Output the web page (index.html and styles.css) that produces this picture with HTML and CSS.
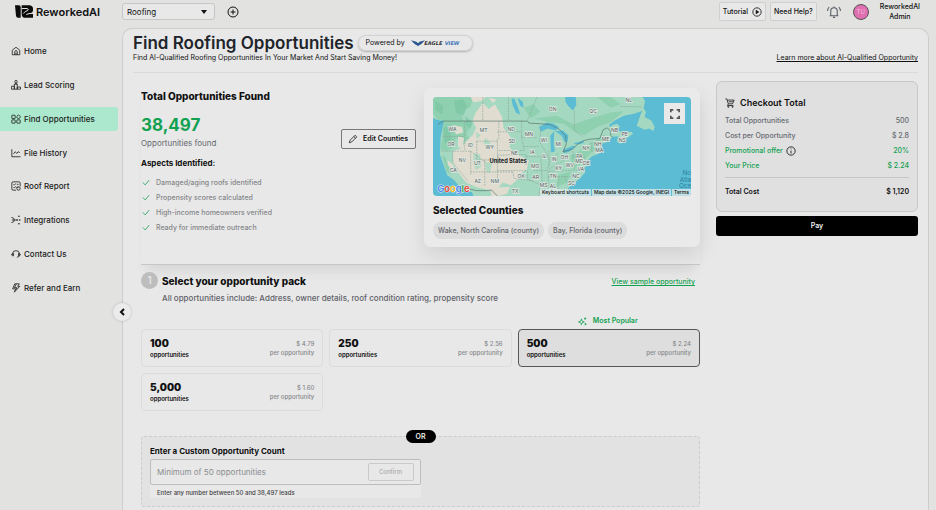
FILE: index.html
```html
<!DOCTYPE html>
<html lang="en">

<head>
  <meta charset="UTF-8">
  <meta name="viewport" content="width=device-width, initial-scale=1.0">
  <title>Find Roofing Opportunities</title>
  <link rel="stylesheet" href="styles.css">
</head>

<body>
  <header class="topbar">
    <div class="brand">
      <svg class="brand-logo" viewBox="0 0 54 38">
        <path d="M0 0H12Q17 0 17 6V38H9Q4 38 3 32Z" fill="#0b0b0b" />
        <path d="M20 0H42Q54 0 54 11V16Q54 22 46 24H54V38H32Q20 38 20 27Z" fill="#0b0b0b" />
        <path d="M20 10H36Q43 12 38 16Q30 18 25 25M34 28Q40 24 54 25" fill="none" stroke="#e2e2e0" stroke-width="3" />
      </svg>
      <span>ReworkedAI</span>
    </div>
    <div class="select-wrap">
      <select class="industry" aria-label="Industry">
        <option>Roofing</option>
        <option>Solar</option>
      </select>
      <svg class="caret" viewBox="0 0 6 4"><path d="M0 0H6L3 4Z" fill="#111" /></svg>
    </div>
    <button class="icon-btn" aria-label="Add">
      <svg viewBox="0 0 24 24"><circle cx="12" cy="12" r="10" /><path d="M12 7V17M7 12H17" /></svg>
    </button>
    <div class="topbar-right">
      <button class="top-btn">Tutorial
        <svg viewBox="0 0 24 24"><circle cx="12" cy="12" r="10" /><path d="M10 8L16 12L10 16Z" fill="#111" /></svg>
      </button>
      <button class="top-btn">Need Help?</button>
      <button class="bell" aria-label="Notifications">
        <svg viewBox="0 0 26 26"><path d="M5 20H21M7 20V11Q7 5 13 5Q19 5 19 11V20M13 5V3M11 23H15M4 4Q1 7 1 11M22 4Q25 7 25 11" /></svg>
      </button>
      <span class="avatar">TU</span>
      <span class="user-name">ReworkedAI<br>Admin</span>
    </div>
  </header>

  <div class="layout">
    <aside class="sidebar">
      <nav class="nav">
        <a href="#" class="nav-item">
          <svg viewBox="0 0 24 24"><path d="M3 10L12 3L21 10V21H3ZM9 21V14Q9 11 12 11Q15 11 15 14V21M12 16V21" /></svg>
          Home</a>
        <a href="#" class="nav-item">
          <svg viewBox="0 0 24 24"><path d="M1 22V15H8V22M8 22V10H15V22M15 22V17H23V22ZM1 22H15" /><circle cx="12" cy="4" r="3" /><path d="M9 10Q12 6 15 10" /></svg>
          Lead Scoring</a>
        <a href="#" class="nav-item active">
          <svg viewBox="0 0 24 24"><rect x="2" y="3" width="8" height="8" rx="1" /><rect x="2" y="14" width="8" height="8" rx="1" /><rect x="14" y="14" width="8" height="8" rx="1" /><path d="M18 2L23 7L18 12L13 7Z" /></svg>
          Find Opportunities</a>
        <a href="#" class="nav-item">
          <svg viewBox="0 0 24 24"><path d="M2 3V21H23M6 14L10 9L14 13L17 9L21 11" /></svg>
          File History</a>
        <a href="#" class="nav-item">
          <svg viewBox="0 0 24 24"><path d="M12 22H5Q2 22 2 19V5Q2 2 5 2H19Q22 2 22 5V13M6 8L8 10L11 6M14 8H18M6 15L8 17L11 13" /><circle cx="18" cy="18" r="4" /><path d="M13 15H18" /></svg>
          Roof Report</a>
        <a href="#" class="nav-item">
          <svg viewBox="0 0 24 24"><path d="M1 6Q8 6 8 12Q8 18 1 18M8 12H15M2 12H8" /><g class="solid"><circle cx="19" cy="3" r="2" /><circle cx="15" cy="12" r="2" /><circle cx="21" cy="12" r="2" /><circle cx="19" cy="21" r="2" /></g></svg>
          Integrations</a>
        <a href="#" class="nav-item">
          <svg viewBox="0 0 24 24"><path d="M4 15V11Q4 4 12 4Q20 4 20 11V15Q20 19 14 20M4 11Q1 11 2 15Q3 17 6 16V11ZM20 11Q23 11 22 15Q21 17 18 16V11Z" /></svg>
          Contact Us</a>
        <a href="#" class="nav-item">
          <svg viewBox="0 0 24 24"><path d="M9 2H20L16 8H21L8 22L11 14H4ZM13 2L8 11H14L11 17" /></svg>
          Refer and Earn</a>
      </nav>
      <button class="collapse" aria-label="Collapse menu">
        <svg viewBox="0 0 6 8"><path d="M5 1L2 4L5 7" /></svg>
      </button>
    </aside>

    <main class="panel">
      <div class="page-head">
        <div>
          <div class="title-row">
            <h1>Find Roofing Opportunities</h1>
            <span class="powered">Powered by
              <svg class="eagle" viewBox="0 0 150 18">
                <path d="M0 1L16 5L21 10L26 5L42 1L31 12L21 18L11 12Z" fill="#2b5590" />
                <text x="40" y="15" fill="#333">EAGLE</text>
                <text x="101" y="15" fill="#3f74b8">VIEW</text>
              </svg>
            </span>
          </div>
          <p class="subtitle">Find AI-Qualified Roofing Opportunities In Your Market And Start Saving Money!</p>
        </div>
        <a href="#" class="learn">Learn more about AI-Qualified Opportunity</a>
      </div>

      <div class="columns">
        <div class="content">
          <section class="found">
            <div class="found-left">
              <h2>Total Opportunities Found</h2>
              <div class="count">38,497</div>
              <div class="count-label">Opportunities found</div>
              <h3>Aspects Identified:</h3>
              <ul class="aspects">
                <li><svg viewBox="0 0 10 8"><path d="M1 4L4 7L9 1" /></svg>Damaged/aging roofs identified</li>
                <li><svg viewBox="0 0 10 8"><path d="M1 4L4 7L9 1" /></svg>Propensity scores calculated</li>
                <li><svg viewBox="0 0 10 8"><path d="M1 4L4 7L9 1" /></svg>High-income homeowners verified</li>
                <li><svg viewBox="0 0 10 8"><path d="M1 4L4 7L9 1" /></svg>Ready for immediate outreach</li>
              </ul>
            </div>
            <button class="edit-btn">
              <svg viewBox="0 0 24 24"><path d="M3 21L5 15L17 3L21 7L9 19ZM14 6L18 10" /></svg>
              Edit Counties
            </button>
            <div class="map-card">
              <div class="map">
                <svg class="map-art" viewBox="27 28 776 296" preserveAspectRatio="xMidYMid slice">
                  <rect x="27" y="28" width="776" height="296" fill="#5bbcd3" />
                  <!-- land -->
                  <path fill="#a5d8c1" d="M27 28H656L663 40L658 68L630 78L600 84L570 100L556 114L580 108L588 116L582 128L600 136L622 132L628 138L606 152L592 168L578 160L584 146L566 146L556 160L534 168L528 182L538 190L524 198L504 206L494 216L492 232L482 240L484 254L468 272L446 290L432 302L434 324H142L130 306L112 300L92 276L72 262L58 224L50 200L52 150L60 110L46 98L27 90Z" />
                  <path fill="#a5d8c1" d="M658 62L666 72L662 88L682 98L692 118L688 130L676 122L662 126L638 114L644 98L650 80Z" />
                  <path fill="#8fd0b0" d="M27 28H150L140 60L112 70L120 98L146 112L130 136L142 160L120 172L98 150L92 178L70 190L52 184L62 110L40 92L27 74ZM330 92L400 84L450 110L500 92L560 74L600 70L560 104L520 118L482 142L450 130L420 108L380 104ZM300 60L330 50L350 72L322 92ZM520 28H560L590 50L560 60ZM56 204L66 206L84 260L70 252ZM440 204L480 184L500 166L530 148L540 164L500 196L466 232L448 250ZM404 262L442 250L430 284L400 296Z" />
                  <path fill="#79c5a2" d="M92 40L118 34L132 54L120 84L98 74ZM60 120L80 112L84 156L64 166ZM36 40L60 54L58 80L36 66ZM126 86L148 104L140 122L128 112Z" opacity=".7" />
                  <!-- dry areas -->
                  <path fill="#e0dcd0" d="M156 76L178 46L196 64L214 50L236 88L240 120L262 148L258 178L276 198L316 218L310 244L292 256L288 270L262 292L238 284L224 300L206 308L160 298L128 284L104 252L90 226L88 190L112 182L128 160L148 142L158 120L148 100Z" />
                  <path fill="#e0dcd0" d="M142 28H186L176 40L150 44ZM196 30L220 36L208 46ZM88 112L116 118L120 134L98 140ZM104 146L122 150L118 178L104 180ZM72 216L92 232L88 244L74 232ZM200 300L260 296L250 318L224 324H204Z" />
                  <path fill="#a5d8c1" d="M150 196L170 200L174 236L158 246L150 226ZM184 222L206 226L200 256L188 250ZM186 150L202 166L196 178L180 168ZM158 132L172 142L160 154Z" opacity=".8" />
                  <!-- lakes -->
                  <path fill="#5bbcd3" d="M424 28H456L458 52L448 68L436 58L426 44ZM264 34L272 32L282 56L290 80L278 76L268 54ZM282 30L298 42L300 60L290 54ZM346 118L370 104L390 108L406 118L396 128L372 122L352 132ZM380 144L392 130L390 168L394 190L382 194ZM394 130L418 128L434 142L432 160L424 164L414 144ZM418 186L448 174L456 176L436 192L420 196ZM450 166L482 158L478 166L456 170ZM40 96L62 100L60 112L46 106ZM128 308L146 312L150 324H134Z" />
                  <path fill="#5bbcd3" d="M556 110L596 88L620 84L600 100L574 104L560 118Z" />
                  <!-- state lines -->
                  <g fill="none" stroke="#8ba79b" stroke-width="2" stroke-dasharray="5 3">
                    <path d="M178 28V100M255 28V100M340 28L312 96M452 70V130L478 146M60 146H124M124 100V186M54 190H142M88 190V224L134 280M142 190V262M142 190L184 222M160 160H222M226 100V154M160 160V216H222M222 154V272M184 216V296M222 132H294M294 100V148L302 188H222M222 248H310M222 202L308 200V234M142 252H268M268 252L272 272L330 278M294 148L342 150M300 176H346M308 206H352L356 290M330 248H372M352 118L348 162L364 188L380 220L370 248M376 188V236M400 196V224M430 196L424 216L376 244M376 250L470 246M372 266H440M374 250V300M404 266V304M424 266L432 292M448 190V208H484M448 226L466 210M500 164L506 196M520 156L522 186M540 140L546 162M312 250V274L350 290L346 324M590 56L656 58" />
                  </g>
                  <!-- borders -->
                  <path fill="none" stroke="#55736b" stroke-width="2" d="M44 110L60 100H312L316 106L350 108L378 110L406 124L426 144L428 168L418 192L446 184L458 172L480 158L500 154L528 152L538 126L550 120L560 130V142L566 148M122 300L160 308L190 308L204 306L222 324" />
                  <g class="state">
                    <text x="87" y="130">WA</text><text x="181" y="134">MT</text><text x="263" y="129">ND</text><text x="83" y="175">OR</text>
                    <text x="141" y="177">ID</text><text x="199" y="184">WY</text><text x="265" y="165">SD</text><text x="316" y="144">MN</text>
                    <text x="361" y="163">WI</text><text x="404" y="175">MI</text><text x="273" y="201">NE</text><text x="326" y="197">IA</text>
                    <text x="362" y="209">IL</text><text x="391" y="219">IN</text><text x="422" y="214">OH</text><text x="117" y="223">NV</text>
                    <text x="162" y="230">UT</text><text x="90" y="252">CA</text><text x="163" y="285">AZ</text><text x="214" y="285">NM</text>
                    <text x="293" y="271">OK</text><text x="336" y="274">AR</text><text x="335" y="241">MO</text><text x="405" y="246">KY</text>
                    <text x="438" y="238">WV</text><text x="388" y="269">TN</text><text x="457" y="271">NC</text><text x="443" y="292">SC</text>
                    <text x="275" y="314">TX</text><text x="360" y="296">MS</text><text x="388" y="301">AL</text><text x="471" y="250">VA</text>
                    <text x="467" y="211">PA</text><text x="467" y="224">MD</text><text x="488" y="231">DE</text><text x="487" y="185">NY</text>
                    <text x="522" y="175">NH</text><text x="526" y="193">MA</text><text x="545" y="160">ME</text><text x="572" y="134">NB</text>
                    <text x="602" y="144">PE</text><text x="595" y="163">NS</text><text x="387" y="71">ON</text><text x="508" y="75">QC</text><text x="615" y="44">NL</text>
                  </g>
                  <text class="country" x="254" y="224">United States</text>
                  <g class="ocean"><text x="801" y="260">No</text><text x="801" y="281">Atla</text><text x="801" y="301">Oce</text></g>
                  <text class="google" x="42" y="312"><tspan fill="#4285f4">G</tspan><tspan fill="#ea4335">o</tspan><tspan fill="#fbbc05">o</tspan><tspan fill="#4285f4">g</tspan><tspan fill="#34a853">l</tspan><tspan fill="#ea4335">e</tspan></text>
                </svg>
                <button class="fullscreen" aria-label="Toggle fullscreen">
                  <svg viewBox="0 0 12 12"><path d="M1 4V1H4M8 1H11V4M11 8V11H8M4 11H1V8" /></svg>
                </button>
                <div class="map-credits"><span>Keyboard shortcuts</span><span>Map data ©2025 Google, INEGI</span><span>Terms</span></div>
              </div>
              <h2>Selected Counties</h2>
              <div class="chips">
                <span class="chip">Wake, North Carolina (county)</span>
                <span class="chip">Bay, Florida (county)</span>
              </div>
            </div>
          </section>

          <section class="packs-section">
            <div class="step-head">
              <span class="step">1</span>
              <h2>Select your opportunity pack</h2>
              <a href="#" class="sample">View sample opportunity</a>
            </div>
            <p class="includes">All opportunities include: Address, owner details, roof condition rating, propensity score</p>
            <div class="popular">
              <svg viewBox="0 0 24 24"><path d="M9 5L11 11L17 13L11 15L9 21L7 15L1 13L7 11ZM19 1V8M16 4H22M20 16V22M17 19H23" /></svg>
              Most Popular
            </div>
            <div class="packs">
              <button class="pack"><span class="pack-name"><strong>100</strong>opportunities</span><span class="pack-price">$ 4.79<br>per opportunity</span></button>
              <button class="pack"><span class="pack-name"><strong>250</strong>opportunities</span><span class="pack-price">$ 2.56<br>per opportunity</span></button>
              <button class="pack selected"><span class="pack-name"><strong>500</strong>opportunities</span><span class="pack-price">$ 2.24<br>per opportunity</span></button>
              <button class="pack"><span class="pack-name"><strong>5,000</strong>opportunities</span><span class="pack-price">$ 1.60<br>per opportunity</span></button>
            </div>
          </section>

          <section class="custom">
            <span class="or">OR</span>
            <label for="customCount">Enter a Custom Opportunity Count</label>
            <div class="custom-box">
              <div class="custom-field">
                <input type="text" id="customCount" placeholder="Minimum of 50 opportunities">
                <button class="confirm" disabled>Confirm</button>
              </div>
              <p class="hint">Enter any number between 50 and 38,497 leads</p>
            </div>
          </section>
        </div>

        <aside class="checkout">
          <div class="checkout-card">
            <h2>
              <svg viewBox="0 0 24 24"><path d="M1 2H4L8 14H18L22 5H5M8 14L6 18H20M9 9H19" /><circle cx="8" cy="21" r="1.5" /><circle cx="18" cy="21" r="1.5" /></svg>
              Checkout Total
            </h2>
            <div class="line"><span>Total Opportunities</span><span>500</span></div>
            <div class="line"><span>Cost per Opportunity</span><span>$ 2.8</span></div>
            <div class="line green"><span>Promotional offer
              <svg viewBox="0 0 24 24"><circle cx="12" cy="12" r="10" /><path d="M12 11V18M12 6V8" /></svg></span><span>20%</span></div>
            <div class="line green"><span>Your Price</span><span>$ 2.24</span></div>
            <div class="line total"><span>Total Cost</span><span>$ 1,120</span></div>
          </div>
          <button class="pay">Pay</button>
        </aside>
      </div>
    </main>
  </div>
</body>

</html>
```
FILE: styles.css
```css
* {
  box-sizing: border-box;
}

body {
  margin: 0;
  height: 100vh;
  overflow: hidden;
  display: flex;
  flex-direction: column;
  background-color: #e2e2e0;
  color: #111;
  font-family: Inter, "Liberation Sans", sans-serif;
  font-size: 8px;
  line-height: 10px;
}

h1,
h2,
h3,
p,
ul {
  margin: 0;
  padding: 0;
}

button,
input,
select {
  font: inherit;
  color: inherit;
  margin: 0;
  padding: 0;
  border: none;
  background: none;
}

a {
  color: inherit;
}

svg {
  display: block;
  flex: none;
  fill: none;
  stroke-width: 2;
}

h2 {
  font-size: 10px;
  line-height: 14px;
  font-weight: 800;
}

/* top bar */
.topbar {
  display: flex;
  align-items: center;
  height: 28px;
  padding: 0 16px 5px 15px;
}

.brand {
  display: flex;
  align-items: center;
  gap: 3px;
  width: 107px;
  font-size: 11px;
  font-weight: 600;
}

.brand-logo {
  width: 18px;
  height: 13px;
}

.select-wrap {
  position: relative;
}

.industry {
  appearance: none;
  display: block;
  width: 93px;
  height: 17px;
  padding: 0 4px;
  border: 1px solid #c6c6c6;
  border-radius: 3px;
  background-color: #e8e8e8;
}

.caret {
  position: absolute;
  right: 8px;
  top: 7px;
  width: 6px;
  height: 4px;
}

.icon-btn {
  margin-left: 12px;
}

.icon-btn svg {
  width: 12px;
  height: 12px;
  stroke: #111;
}

.topbar-right {
  display: flex;
  align-items: center;
  margin-left: auto;
}

.top-btn {
  display: flex;
  align-items: center;
  gap: 4px;
  height: 19px;
  margin-right: 4px;
  padding: 0 3px;
  border: 1px solid #cfcfcf;
  border-radius: 2px;
  background-color: #e8e8e8;
  font-size: 7px;
  font-weight: 500;
}

.top-btn svg {
  width: 10px;
  height: 10px;
  stroke: #111;
}

.bell {
  margin: 0 12px 0 6px;
}

.bell svg {
  width: 14px;
  height: 14px;
  stroke: #555b66;
}

.avatar {
  width: 16px;
  height: 16px;
  border: 1px solid #555;
  border-radius: 50%;
  background-color: #df6fb0;
  color: #f3c3de;
  font-size: 6px;
  line-height: 14px;
  text-align: center;
}

.user-name {
  margin-left: 11px;
  font-size: 7px;
  font-weight: 500;
  text-align: center;
}

/* sidebar */
.layout {
  flex: 1;
  display: flex;
  min-height: 0;
  padding-right: 7px;
}

.sidebar {
  position: relative;
  flex: none;
  width: 122px;
  padding: 11px 4px 0 0;
}

.nav {
  display: flex;
  flex-direction: column;
  justify-content: space-between;
  height: 261px;
}

.nav-item {
  display: flex;
  align-items: center;
  gap: 3px;
  height: 24px;
  padding-left: 11px;
  border-radius: 0 3px 3px 0;
  font-weight: 500;
  text-decoration: none;
  color: #1c1c1c;
}

.nav-item svg {
  width: 10px;
  height: 10px;
  stroke: #222;
}

.nav-item .solid {
  fill: #222;
  stroke: none;
}

.nav-item.active {
  background-color: #abe8cd;
}

.collapse {
  position: absolute;
  right: -9px;
  top: 275px;
  display: flex;
  align-items: center;
  justify-content: center;
  width: 18px;
  height: 18px;
  border-radius: 50%;
  background-color: #ebebeb;
  box-shadow: 0 0 3px rgba(0, 0, 0, 0.2);
}

.collapse svg {
  width: 6px;
  height: 8px;
  stroke: #111;
}

/* main panel */
.panel {
  flex: 1;
  min-width: 0;
  padding: 4px 10px 0;
  border: 1px solid #cdcdcd;
  border-bottom: none;
  border-radius: 10px 10px 0 0;
  background-color: #e8e8e8;
}

.page-head {
  display: flex;
  justify-content: space-between;
  align-items: flex-end;
  padding-bottom: 9px;
  border-bottom: 1px solid #dadada;
}

.title-row {
  display: flex;
  align-items: center;
  gap: 4px;
}

h1 {
  font-size: 17px;
  line-height: 20px;
  font-weight: 600;
  color: #20242a;
}

.powered {
  display: flex;
  align-items: center;
  gap: 6px;
  height: 16px;
  padding: 0 11px 0 7px;
  border: 1px solid #d2d2d2;
  border-radius: 8px;
  box-shadow: 0 1px 2px rgba(0, 0, 0, 0.25);
  font-size: 7px;
}

.eagle {
  width: 50px;
  height: 6px;
}

.eagle text {
  font-family: "DejaVu Sans", sans-serif;
  font-size: 15px;
  font-style: italic;
  font-weight: 700;
}

.subtitle,
.learn {
  font-size: 7px;
  font-weight: 400;
}

.columns {
  display: flex;
  gap: 16px;
  padding: 8px 0 0 8px;
}

.content {
  flex: 1;
  min-width: 0;
}

.found {
  display: flex;
  align-items: flex-start;
  padding: 7px 0 17px;
  border-bottom: 1px solid #c6c6c6;
  box-shadow: 0 12px 12px -6px rgba(0, 0, 0, 0.08);
}

.found-left {
  flex: 1;
  padding-top: 1px;
}

.count {
  margin-top: 11px;
  font-size: 17px;
  line-height: 22px;
  font-weight: 700;
  color: #12a150;
}

.count-label {
  margin-top: 2px;
  color: #666a70;
}

h3 {
  margin-top: 10px;
  font-size: 8px;
  line-height: 10px;
}

.aspects {
  margin-top: 7px;
  list-style: none;
  font-size: 7px;
  font-weight: 500;
  color: #85878a;
}

.aspects li {
  display: flex;
  align-items: center;
  gap: 6px;
  height: 15px;
  padding-left: 1px;
}

.aspects svg {
  width: 8px;
  height: 7px;
  stroke: #12a150;
  stroke-width: 1;
}

.edit-btn {
  display: flex;
  align-items: center;
  gap: 5px;
  height: 20px;
  margin: 41px 8px 0 0;
  padding: 0 7px 0 6px;
  border: 1px solid #777;
  border-radius: 2px;
  font-size: 7px;
  font-weight: 600;
}

.edit-btn svg {
  width: 10px;
  height: 10px;
  stroke: #222;
}

.map-card {
  width: 276px;
  padding: 9px 9px 8px;
  border-radius: 7px;
  background-color: #eaeaea;
  box-shadow: 0 8px 20px rgba(0, 0, 0, 0.1);
}

.map {
  position: relative;
  height: 99px;
  overflow: hidden;
  border-radius: 4px;
}

.map-art {
  width: 100%;
  height: 100%;
}

.state text {
  font-size: 15px;
  fill: #50605a;
  stroke: #e3e9e5;
  stroke-width: 4;
  paint-order: stroke;
  text-anchor: middle;
}

.country {
  font-size: 17px;
  font-weight: 700;
  fill: #16201d;
  text-anchor: middle;
}

.ocean text {
  font-size: 19px;
  fill: #2a7fa0;
  text-anchor: end;
}

.google {
  font-size: 28px;
  font-weight: 600;
  stroke: #e8e8e8;
  stroke-width: 3;
  paint-order: stroke;
}

.fullscreen {
  position: absolute;
  top: 6px;
  right: 6px;
  display: flex;
  align-items: center;
  justify-content: center;
  width: 21px;
  height: 21px;
  background-color: #e9e9e9;
}

.fullscreen svg {
  width: 10px;
  height: 10px;
  stroke: #555;
}

.map-credits {
  position: absolute;
  right: 0;
  bottom: 0;
  display: flex;
  gap: 1px;
  font-size: 5px;
  line-height: 7px;
  font-weight: 500;
}

.map-credits span {
  padding: 0 2px;
  background-color: rgba(225, 235, 235, 0.75);
}

.map-card h2 {
  margin-top: 7px;
}

.chips {
  display: flex;
  gap: 4px;
  margin-top: 5px;
}

.chip {
  padding: 0 5px;
  border-radius: 8px;
  background-color: #dcdcdc;
  font-size: 7px;
  line-height: 17px;
  font-weight: 500;
  color: #63666b;
}

/* packs */
.packs-section {
  padding-top: 7px;
}

.step-head {
  display: flex;
  align-items: center;
  gap: 4px;
}

.step {
  width: 17px;
  height: 17px;
  border-radius: 50%;
  background-color: #bdbdbd;
  color: #e6e6e6;
  font-size: 10px;
  line-height: 17px;
  font-weight: 600;
  text-align: center;
}

.sample {
  margin: 3px 5px 0 auto;
  font-size: 7px;
  font-weight: 500;
  color: #12a150;
}

.includes {
  margin: 4px 0 0 21px;
  font-weight: 500;
  color: #5f6268;
}

.popular {
  display: flex;
  align-items: center;
  justify-content: center;
  gap: 6px;
  width: 33%;
  margin: 13px 0 3px auto;
  font-size: 7px;
  font-weight: 600;
  color: #12a150;
}

.popular svg {
  width: 9px;
  height: 9px;
  stroke: #12a150;
}

.packs {
  display: grid;
  grid-template-columns: repeat(3, 1fr);
  gap: 6px;
}

.pack {
  display: flex;
  align-items: center;
  justify-content: space-between;
  height: 38px;
  padding: 0 8px;
  border: 1px solid #dcdcdc;
  border-radius: 4px;
}

.pack.selected {
  border-color: #555;
  background-color: #dedede;
}

.pack-name {
  font-size: 6px;
  font-weight: 600;
  text-align: left;
}

.pack-name strong {
  display: block;
  font-size: 10px;
  line-height: 13px;
}

.pack-price {
  font-size: 6px;
  line-height: 9px;
  font-weight: 500;
  color: #85878a;
  text-align: right;
}

/* custom count */
.custom {
  position: relative;
  margin-top: 25px;
  padding: 9px 8px 8px;
  border: 1px dashed #cccccc;
  border-radius: 3px;
  background-color: #e2e2e2;
}

.custom label {
  display: block;
  font-weight: 700;
}

.or {
  position: absolute;
  top: -7px;
  left: 50%;
  width: 30px;
  margin-left: -15px;
  border-radius: 7px;
  background-color: #000;
  color: #eee;
  font-size: 7px;
  line-height: 13px;
  font-weight: 600;
  text-align: center;
}

.custom-box {
  width: 50%;
  margin-top: 3px;
  background-color: #e8e8e8;
}

.custom-field {
  display: flex;
  align-items: center;
  height: 26px;
  padding: 0 6px;
  border: 1px solid #bdbdbd;
  border-radius: 2px;
}

.custom-field input {
  flex: 1;
  min-width: 0;
}

.custom-field input::placeholder {
  color: #8b8d90;
}

.confirm {
  width: 46px;
  height: 18px;
  border: 1px solid #cacaca;
  border-radius: 2px;
  color: #aaa;
  font-size: 6px;
  font-weight: 500;
}

.hint {
  padding: 3px 7px 0;
  font-size: 6px;
  font-weight: 500;
  color: #444;
}

/* checkout */
.checkout {
  flex: none;
  width: 202px;
}

.checkout-card {
  padding: 14px 8px 6px;
  border: 1px solid #c8c8c8;
  border-radius: 6px;
  background-color: #e0e0e0;
}

.checkout h2 {
  display: flex;
  align-items: center;
  gap: 5px;
  margin-bottom: 3px;
  font-size: 9px;
  font-weight: 600;
}

.checkout h2 svg {
  width: 10px;
  height: 10px;
  stroke: #222;
}

.line {
  display: flex;
  justify-content: space-between;
  align-items: center;
  height: 15px;
  font-size: 7px;
  font-weight: 500;
  color: #666a70;
}

.line span {
  display: flex;
  align-items: center;
  gap: 3px;
}

.line svg {
  width: 10px;
  height: 10px;
  stroke: #111;
}

.line.green {
  color: #12a150;
}

.line.total {
  height: 28px;
  margin-top: 4px;
  border-top: 1px solid #c6c6c6;
  font-weight: 600;
  color: #111;
}

.pay {
  display: block;
  width: 100%;
  height: 20px;
  margin-top: 4px;
  border-radius: 3px;
  background-color: #000;
  color: #eee;
  font-size: 7px;
  font-weight: 600;
}
```
